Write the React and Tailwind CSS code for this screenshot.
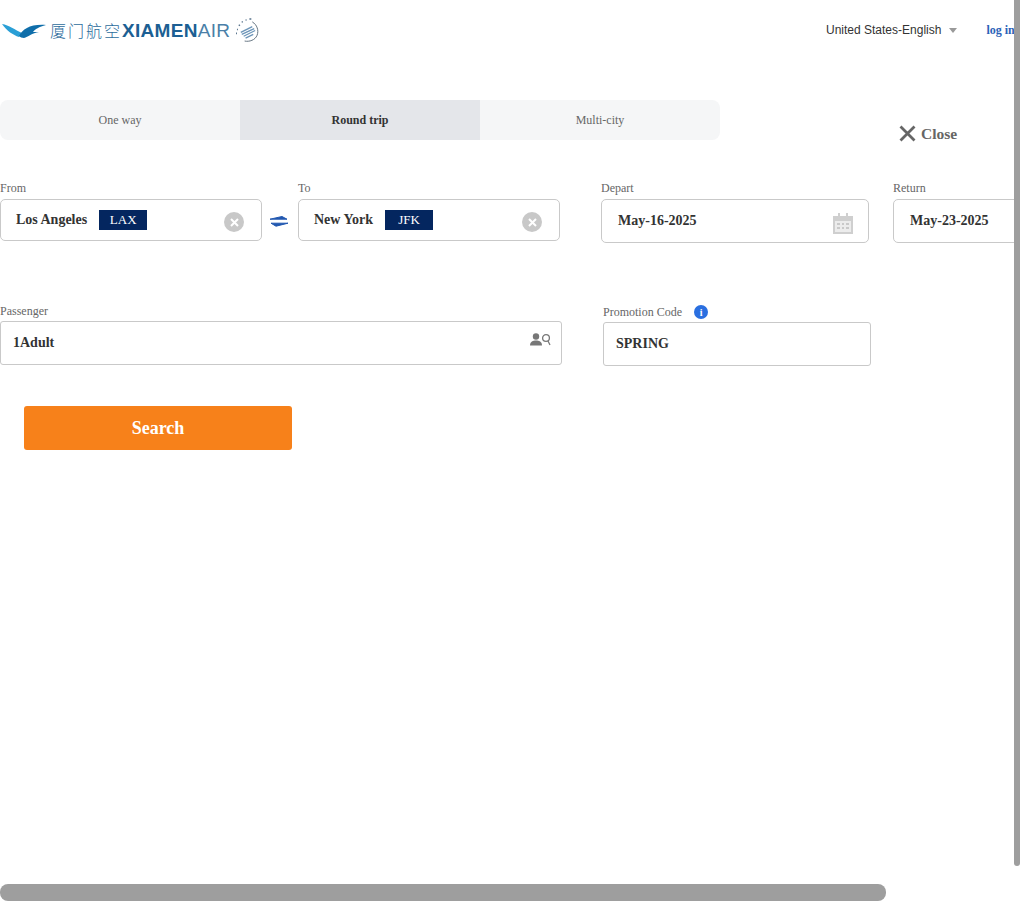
import React from "react";

const serif = "font-['Liberation_Serif','Times_New_Roman',serif]";

function Logo() {
  return (
    <div className="flex items-center">
      <svg width="44" height="16" viewBox="0 0 44 16" className="mt-[2px]">
        <path d="M0 1 C7 2 13 7 20 10 L17 14 C11 12 5 8 0 1 Z" fill="#2a9fd6" />
        <path d="M17 13 C21 6 28 1 44 2 C37 4 33 6 31 9 L37 9 C30 10 26 14 22 15 C20 15 18 14 17 13 Z" fill="#0f6eaa" />
      </svg>
      <span className="ml-1 text-[16px] leading-none tracking-[2px] text-[#2c6c9c] font-['Noto_Sans_CJK_SC',sans-serif] font-light">
        厦门航空
      </span>
      <span className="text-[19px] leading-none tracking-[0.3px] font-bold text-[#1c5f93] font-['Liberation_Sans',Arial,sans-serif]">
        XIAMEN
      </span>
      <span className="text-[19px] leading-none tracking-[0.3px] text-[#4a7fa8] font-['Liberation_Sans',Arial,sans-serif]">
        AIR
      </span>
      <svg className="ml-[6px]" width="23" height="25" viewBox="0 0 24 26" fill="none">
        <path d="M17 4 C22 7 24 13 22 18 C20 23 14 25 9 24" stroke="#5f6f7c" strokeWidth="1" />
        <path d="M5 15 L17 9 M6 17 L19 11 M8 19 L20 13 M10 21 L18 17" stroke="#6d95b8" strokeWidth="1.4" />
        <path d="M0 16 L1 16 M1 12 L2 12 M3 8 L4 7 M6 4 L7 4 M10 2 L11 2 M14 1 L16 1" stroke="#55718a" strokeWidth="1.6" />
      </svg>
    </div>
  );
}

function ClearIcon() {
  return (
    <span className="w-5 h-5 rounded-full bg-[#c8c8c8] flex items-center justify-center mt-1">
      <svg width="9" height="9" viewBox="0 0 9 9">
        <path d="M1 1 L8 8 M8 1 L1 8" stroke="#fff" strokeWidth="2" />
      </svg>
    </span>
  );
}

function CityField({ label, city, code, width }) {
  return (
    <div className={width}>
      <div className="text-xs leading-[12px] h-[17px] text-[#666]">{label}</div>
      <div className="h-[42px] border border-[#c9c9c9] rounded-[5px] flex items-center pl-[15px] pr-[17px] bg-white">
        <span className="text-sm font-bold text-[#333] leading-none">{city}</span>
        <span className="ml-3 w-12 h-5 pb-[2px] bg-[#04265f] text-white text-[13px] flex items-center justify-center">
          {code}
        </span>
        <span className="ml-auto">
          <ClearIcon />
        </span>
      </div>
    </div>
  );
}

function CalendarIcon() {
  return (
    <svg width="20" height="21" viewBox="0 0 20 21" className="mt-1">
      <path d="M5 0 H7 V3 H13 V0 H15 V3 H20 V21 H0 V3 H5 Z" fill="#cfcfcf" />
      <rect x="2" y="8" width="16" height="11" fill="#ececec" />
      <path d="M4 11 H7 M9 11 H11 M13 11 H16 M4 15 H7 M9 15 H11 M13 15 H16" stroke="#bdbdbd" strokeWidth="1.5" />
    </svg>
  );
}

function DateField({ label, value, width, icon }) {
  return (
    <div className={width}>
      <div className="text-xs leading-[12px] h-[17px] text-[#666]">{label}</div>
      <div className="h-11 border border-[#c9c9c9] rounded-[5px] flex items-center justify-between pl-4 pr-[15px] bg-white">
        <span className="text-sm font-bold text-[#333]">{value}</span>
        {icon}
      </div>
    </div>
  );
}

export default function App() {
  return (
    <div className={`relative w-[1020px] h-[901px] overflow-hidden bg-white ${serif}`}>
      <div className="flex items-center h-[60px] pl-[2px]">
        <Logo />
        <div className="ml-auto flex items-center w-[194px] shrink-0">
          <span className="text-xs text-[#333] font-['Liberation_Sans',Arial,sans-serif]">United States-English</span>
          <span className="ml-[8px] mt-[1px] w-0 h-0 border-x-[4px] border-x-transparent border-t-[5px] border-t-[#999]" />
          <span className="ml-[29px] text-xs font-bold text-[#2b62b8] whitespace-nowrap">log in</span>
        </div>
      </div>

      <div className="flex items-start mt-10 w-[1100px]">
        <div className="w-[720px] h-10 grid grid-cols-3 rounded-lg overflow-hidden text-xs text-[#666]">
          <div className="bg-[#f5f6f7] flex items-center justify-center">One way</div>
          <div className="bg-[#e4e6ea] flex items-center justify-center font-bold text-[#333]">Round trip</div>
          <div className="bg-[#f5f6f7] flex items-center justify-center">Multi-city</div>
        </div>
        <div className="ml-[179px] mt-[22px] flex items-center text-[#666]">
          <svg width="17" height="17" viewBox="0 0 17 17">
            <path d="M1.5 1.5 L15.5 15.5 M15.5 1.5 L1.5 15.5" stroke="#666" strokeWidth="2.8" />
          </svg>
          <span className="ml-[5px] text-[15.5px] font-bold">Close</span>
        </div>
      </div>

      <div className="flex items-start mt-[37px] w-[1200px]">
        <CityField label="From" city="Los Angeles" code="LAX" width="w-[262px]" />
        <svg className="ml-2 mr-[10px] mt-[34px] shrink-0" width="18" height="11" viewBox="0 0 18 11" fill="none">
          <path d="M0 3.2 H17 L12 0.5 Z" fill="#2258b0" stroke="#2258b0" strokeWidth="1" />
          <path d="M18 7.2 H1 L6 10.2 Z" fill="#2258b0" stroke="#2258b0" strokeWidth="1" />
        </svg>
        <CityField label="To" city="New York" code="JFK" width="w-[262px]" />
        <div className="w-[41px] shrink-0" />
        <DateField label="Depart" value="May-16-2025" width="w-[268px]" icon={<CalendarIcon />} />
        <div className="w-6 shrink-0" />
        <DateField label="Return" value="May-23-2025" width="w-[268px]" />
      </div>

      <div className="flex items-start mt-[61px]">
        <div className="w-[562px]">
          <div className="text-xs leading-[14px] h-[17px] text-[#666]">Passenger</div>
          <div className="h-11 border border-[#c9c9c9] rounded-[3px] flex items-center justify-between pl-3 pr-[10px]">
            <span className="text-sm font-bold text-[#333]">1Adult</span>
            <svg className="-mt-[7px]" width="21" height="13" viewBox="0 0 21 13" fill="none">
              <circle cx="6" cy="3.5" r="3.2" fill="#777" />
              <path d="M0 12.5 C0 8.5 3 7.5 6 7.5 C9 7.5 12 8.5 12 12.5 Z" fill="#777" />
              <circle cx="16" cy="5" r="3.4" stroke="#777" strokeWidth="1.3" />
              <path d="M18 8 L20 12" stroke="#777" strokeWidth="1.3" />
            </svg>
          </div>
        </div>
        <div className="ml-[41px] w-[268px]">
          <div className="flex items-center h-[18px] -mt-[1px] mb-[1px] text-xs text-[#666]">
            Promotion Code
            <span className="ml-3 w-[14px] h-[14px] rounded-full bg-[#2a6fe0] text-white text-[10px] font-bold flex items-center justify-center">
              i
            </span>
          </div>
          <div className="h-11 border border-[#c9c9c9] rounded-[3px] flex items-center pl-3">
            <span className="text-sm font-bold text-[#333]">SPRING</span>
          </div>
        </div>
      </div>

      <button className="block ml-6 mt-10 w-[268px] h-11 bg-[#f7811a] rounded-[3px] text-white text-[18px] font-bold">
        Search
      </button>

      <div className="absolute right-0 top-0 w-[6px] h-[866px] bg-[#9e9e9e] rounded-b-sm" />
      <div className="absolute left-0 bottom-0 w-[886px] h-[17px] bg-[#9e9e9e] rounded-lg" />
    </div>
  );
}
